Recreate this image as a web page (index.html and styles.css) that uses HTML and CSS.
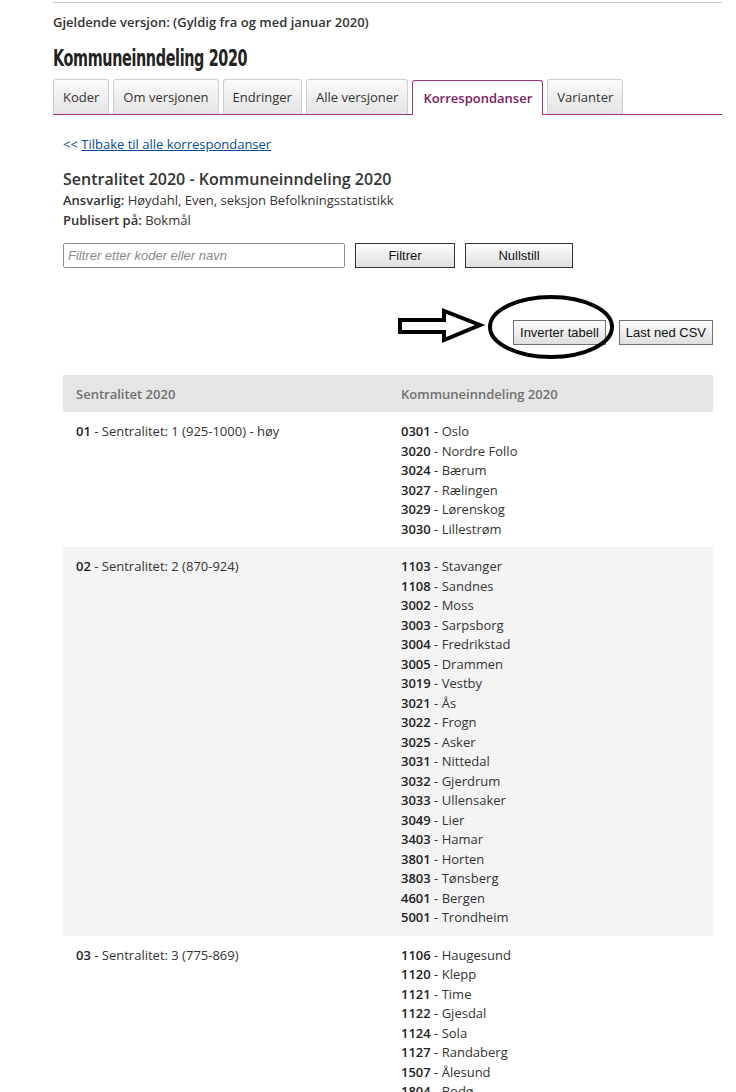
FILE: index.html
```html
<!DOCTYPE html>
<html lang="no">
<head>
    <meta charset="UTF-8">
    <meta name="viewport" content="width=device-width, initial-scale=1.0">
    <title>Kommuneinndeling 2020 - Korrespondanser</title>
    <link rel="stylesheet" href="styles.css">
</head>
<body>

    <div class="page">
        <p class="version">Gjeldende versjon: (Gyldig fra og med januar 2020)</p>
        <h1 class="title"><span>Kommuneinndeling 2020</span></h1>

        <ul class="tabs">
            <li class="tab">Koder</li>
            <li class="tab">Om versjonen</li>
            <li class="tab">Endringer</li>
            <li class="tab">Alle versjoner</li>
            <li class="tab active">Korrespondanser</li>
            <li class="tab">Varianter</li>
        </ul>

        <div class="content">
            <p class="back">&lt;&lt; <a href="#">Tilbake til alle korrespondanser</a></p>

            <h2 class="heading">Sentralitet 2020 - Kommuneinndeling 2020</h2>
            <p class="meta"><b>Ansvarlig:</b> Høydahl, Even, seksjon Befolkningsstatistikk</p>
            <p class="meta"><b>Publisert på:</b> Bokmål</p>

            <div class="filter">
                <input class="filter-input" type="text" placeholder="Filtrer etter koder eller navn">
                <button class="btn filter-btn">Filtrer</button>
                <button class="btn reset-btn">Nullstill</button>
            </div>

            <div class="actions">
                <button class="btn small-btn">Inverter tabell</button>
                <button class="btn small-btn">Last ned CSV</button>

                <!-- markering lagt over skjermbildet -->
                <svg class="mark" width="330" height="70" viewBox="0 0 330 70">
                    <path d="M10 30 L54 30 L54 21 L90 35 L54 50 L54 42 L10 42 Z" fill="none" stroke="#000" stroke-width="4" stroke-linejoin="miter"/>
                    <ellipse cx="161" cy="37" rx="61" ry="30" fill="none" stroke="#000" stroke-width="4"/>
                </svg>
            </div>

            <table class="corr">
                <thead>
                    <tr>
                        <th>Sentralitet 2020</th>
                        <th>Kommuneinndeling 2020</th>
                    </tr>
                </thead>
                <tbody>
                    <tr>
                        <td><b>01</b> - Sentralitet: 1 (925-1000) - høy</td>
                        <td>
                            <b>0301</b> - Oslo<br>
                            <b>3020</b> - Nordre Follo<br>
                            <b>3024</b> - Bærum<br>
                            <b>3027</b> - Rælingen<br>
                            <b>3029</b> - Lørenskog<br>
                            <b>3030</b> - Lillestrøm
                        </td>
                    </tr>
                    <tr>
                        <td><b>02</b> - Sentralitet: 2 (870-924)</td>
                        <td>
                            <b>1103</b> - Stavanger<br>
                            <b>1108</b> - Sandnes<br>
                            <b>3002</b> - Moss<br>
                            <b>3003</b> - Sarpsborg<br>
                            <b>3004</b> - Fredrikstad<br>
                            <b>3005</b> - Drammen<br>
                            <b>3019</b> - Vestby<br>
                            <b>3021</b> - Ås<br>
                            <b>3022</b> - Frogn<br>
                            <b>3025</b> - Asker<br>
                            <b>3031</b> - Nittedal<br>
                            <b>3032</b> - Gjerdrum<br>
                            <b>3033</b> - Ullensaker<br>
                            <b>3049</b> - Lier<br>
                            <b>3403</b> - Hamar<br>
                            <b>3801</b> - Horten<br>
                            <b>3803</b> - Tønsberg<br>
                            <b>4601</b> - Bergen<br>
                            <b>5001</b> - Trondheim
                        </td>
                    </tr>
                    <tr>
                        <td><b>03</b> - Sentralitet: 3 (775-869)</td>
                        <td>
                            <b>1106</b> - Haugesund<br>
                            <b>1120</b> - Klepp<br>
                            <b>1121</b> - Time<br>
                            <b>1122</b> - Gjesdal<br>
                            <b>1124</b> - Sola<br>
                            <b>1127</b> - Randaberg<br>
                            <b>1507</b> - Ålesund<br>
                            <b>1804</b> - Bodø<br>
                            <b>3001</b> - Halden<br>
                            <b>3006</b> - Kongsberg
                        </td>
                    </tr>
                </tbody>
            </table>
        </div>
    </div>

</body>
</html>
```

FILE: styles.css
```css
body {
    margin: 0;
    font-family: "Open Sans", sans-serif;
    font-size: 13px;
    color: #333;
    background: #fff;
}
.page {
    margin: 2px 14px 0 53px;
    border-top: 1px solid #c8c8c8;
    padding-top: 9px;
}
.version {
    margin: 0;
    font-weight: 600;
    line-height: 20px;
    color: #333;
}
.title {
    margin: 11px 0 0;
    height: 30px;
    line-height: 30px;
    font-family: "DejaVu Sans Condensed", sans-serif;
    font-weight: 700;
    font-size: 22.5px;
    color: #222;
}
.title span {
    display: inline-block;
    transform: scaleX(0.71);
    transform-origin: left center;
    letter-spacing: -0.5px;
}
.tabs {
    display: flex;
    gap: 4px;
    margin: 6px 0 0;
    padding: 0;
    list-style: none;
    border-bottom: 1px solid #a8357c;
}
.tab {
    height: 34px;
    line-height: 34px;
    padding: 0 9px;
    border: 1px solid #cfcfcf;
    border-bottom: none;
    border-radius: 3px 3px 0 0;
    background: linear-gradient(#fbfbfb, #e3e3e3);
    color: #333;
    font-size: 13px;
}
.tab.active {
    position: relative;
    bottom: -1px;
    background: #fff;
    border-color: #a8357c;
    color: #7a2060;
    padding: 0 10px;
    font-weight: 600;
}
.content {
    padding: 0 9px 0 10px;
}
.back {
    margin: 20px 0 0;
    line-height: 18px;
    color: #1a3f8a;
}
.back a {
    color: #0a4a9a;
}
.heading {
    margin: 15px 0 0;
    font-size: 16px;
    font-weight: 600;
    line-height: 22px;
    color: #333;
}
.meta {
    margin: 0;
    line-height: 20px;
}
.meta b {
    font-weight: 600;
}
.filter {
    display: flex;
    gap: 10px;
    margin-top: 13px;
}
.filter-input {
    box-sizing: border-box;
    width: 282px;
    height: 25px;
    padding: 0 4px;
    border: 1px solid #8f8f8f;
    border-radius: 2px;
    font-family: "Liberation Sans", Arial, sans-serif;
    font-size: 13px;
}
.filter-input::placeholder {
    color: #8a8a8a;
    font-style: italic;
}
.btn {
    box-sizing: border-box;
    height: 25px;
    border: 1px solid #333;
    border-radius: 0;
    background: linear-gradient(#fdfdfd, #dedede);
    font-family: "Liberation Sans", Arial, sans-serif;
    font-size: 13px;
    color: #111;
    padding: 0;
}
.filter-btn {
    width: 100px;
}
.reset-btn {
    width: 108px;
}
.actions {
    position: relative;
    display: flex;
    justify-content: flex-end;
    gap: 13px;
    margin-top: 52px;
}
.small-btn {
    padding: 0 6px;
    border-color: #6f6f6f;
}
.mark {
    position: absolute;
    left: 327px;
    top: -30px;
}
.corr {
    width: 100%;
    margin-top: 30px;
    border-collapse: collapse;
}
.corr th {
    width: 50%;
    height: 37px;
    padding: 0 13px;
    background: #e5e5e5;
    color: #707070;
    font-weight: 600;
    text-align: left;
}
.corr td {
    padding: 10px 13px 8px;
    line-height: 19.5px;
    vertical-align: top;
    text-align: left;
}
.corr tbody tr:nth-child(even) {
    background: #f4f4f4;
}
.corr b {
    font-weight: 600;
    color: #222;
}
```
